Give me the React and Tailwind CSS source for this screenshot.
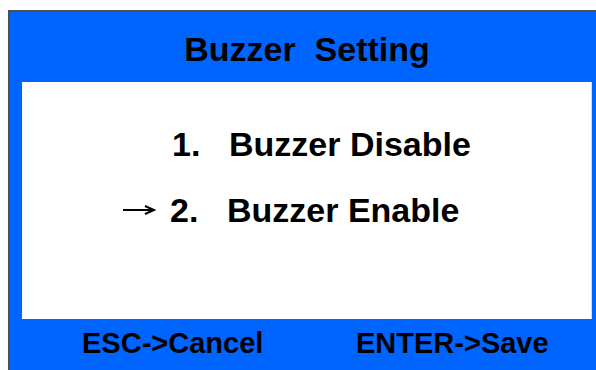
export default function App() {
  const items = [
    { num: "1.", label: "Buzzer Disable", selected: false, pad: "pl-[101px]" },
    { num: "2.", label: "Buzzer Enable", selected: true, pad: "pl-[99px]" },
  ];

  return (
    <div
      className="w-[596px] h-[370px] bg-white overflow-hidden pt-[10px] pl-[8px]"
      style={{ fontFamily: '"Liberation Sans", Arial, sans-serif' }}
    >
      <div className="w-[588px] h-[360px] bg-[#0064ff] border-l-2 border-t-2 border-[#4f4f4f] flex flex-col">
        {/* title */}
        <div className="h-[70px] ml-[12px] w-[570px] pt-[20px] text-center text-black font-bold text-[34px] leading-none whitespace-pre">
          Buzzer  Setting
        </div>

        {/* menu */}
        <div className="ml-[12px] w-[570px] h-[237px] bg-white border-r border-[#cfe0ff] pt-[45px] flex flex-col gap-[32px]">
          {items.map((item) => (
            <div
              key={item.num}
              className={`flex items-center ${item.pad} h-[34px] text-[34px] leading-none font-bold text-black`}
            >
              <span className="w-[36px] flex items-center">
                {item.selected && (
                  <svg width="36" height="12" viewBox="0 0 36 12">
                    <line x1="2" y1="6" x2="32" y2="6" stroke="#000" strokeWidth="2" />
                    <path d="M24 2 L33 6 L24 10" fill="none" stroke="#000" strokeWidth="2" />
                  </svg>
                )}
              </span>
              <span className="ml-[13px] w-[57px]">{item.num}</span>
              <span>{item.label}</span>
            </div>
          ))}
        </div>

        {/* footer */}
        <div className="flex-1 flex items-center pl-[72px] pb-[2px] text-[29px] leading-none font-bold text-black">
          <span className="w-[274px]">ESC-&gt;Cancel</span>
          <span>ENTER-&gt;Save</span>
        </div>
      </div>
    </div>
  );
}
